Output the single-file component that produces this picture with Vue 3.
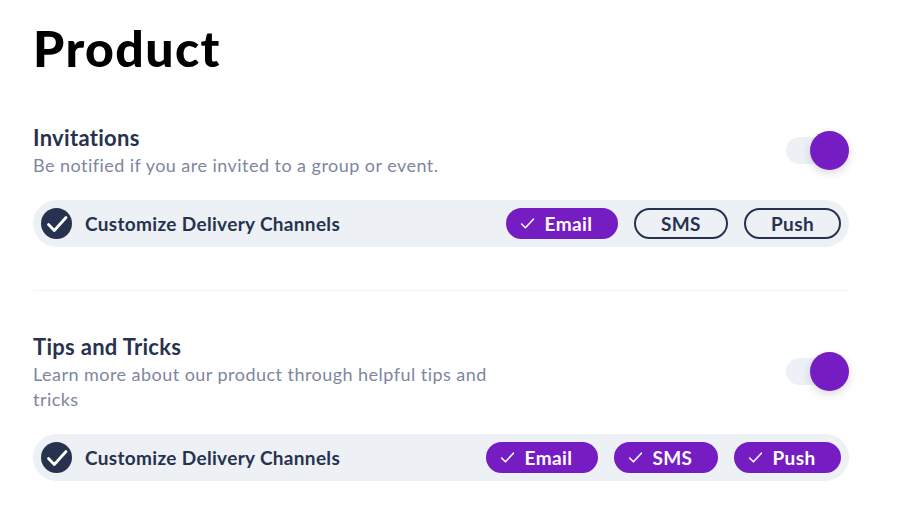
<script setup>
const sections = [
  {
    title: 'Invitations',
    text: 'Be notified if you are invited to a group or event.',
    channels: [
      { name: 'Email', on: true },
      { name: 'SMS', on: false },
      { name: 'Push', on: false },
    ],
  },
  {
    title: 'Tips and Tricks',
    text: 'Learn more about our product through helpful tips and tricks',
    channels: [
      { name: 'Email', on: true },
      { name: 'SMS', on: true },
      { name: 'Push', on: true },
    ],
  },
]
</script>

<template>
  <div class="page">
    <h1 class="heading">Product</h1>

    <section v-for="(s, i) in sections" :key="s.title" class="section" :class="{ 'with-line': i === 0 }">
      <div class="top">
        <div class="info">
          <h2 class="title">{{ s.title }}</h2>
          <p class="desc">{{ s.text }}</p>
        </div>
        <div class="toggle">
          <span class="knob"></span>
        </div>
      </div>

      <div class="channels">
        <span class="round-check">
          <svg width="24" height="24" viewBox="0 0 24 24" fill="none">
            <path d="M3.5 12.5l5.8 6L21 5.5" stroke="#fff" stroke-width="2.8" stroke-linecap="round" stroke-linejoin="round" />
          </svg>
        </span>
        <span class="label">Customize Delivery Channels</span>
        <div class="pills">
          <span v-for="c in s.channels" :key="c.name" class="pill" :class="{ on: c.on }">
            <svg v-if="c.on" class="tick" width="15" height="15" viewBox="0 0 14 14" fill="none">
              <path d="M1.5 7.5l3.6 3.5 7.4-8" stroke="#fff" stroke-width="1.5" stroke-linecap="round" stroke-linejoin="round" />
            </svg>
            {{ c.name }}
          </span>
        </div>
      </div>
    </section>
  </div>
</template>

<style>
html, body {
  background: #fff;
}
</style>

<style scoped>
.page {
  width: 816px;
  padding-left: 33px;
  font-family: "Lato", "Noto Sans", sans-serif;
}

.heading {
  margin: 0;
  padding-top: 18px;
  font-size: 50px;
  line-height: 60px;
  font-weight: 900;
  letter-spacing: 1.4px;
  color: #000;
}

.section {
  padding-top: 40px;
}

.with-line {
  padding-top: 44px;
  padding-bottom: 43px;
  border-bottom: 1px solid #f3f4f6;
}

.top {
  display: flex;
  justify-content: space-between;
  align-items: center;
}

.info {
  width: 470px;
}

.title {
  margin: 0;
  font-size: 22px;
  line-height: 31px;
  font-weight: 700;
  letter-spacing: 0.3px;
  color: #27324f;
}

.desc {
  margin: 0;
  font-size: 18px;
  line-height: 25px;
  letter-spacing: 0.46px;
  color: #7d879e;
}

.toggle {
  position: relative;
  width: 59px;
  height: 27px;
  margin-right: 4px;
  border-radius: 14px;
  background: #edf1f5;
}

.knob {
  position: absolute;
  top: -6px;
  right: -4px;
  width: 39px;
  height: 39px;
  border-radius: 50%;
  background: #761cc3;
  box-shadow: 0 3px 8px rgba(40, 40, 70, 0.18);
}

.channels {
  display: flex;
  align-items: center;
  height: 47px;
  margin-top: 22px;
  padding: 0 8px;
  border-radius: 24px;
  background: #edf1f5;
}

.round-check {
  display: flex;
  align-items: center;
  justify-content: center;
  width: 31px;
  height: 31px;
  border-radius: 50%;
  background: #27324f;
}

.label {
  margin-left: 13px;
  font-size: 19px;
  font-weight: 700;
  letter-spacing: 0.33px;
  color: #27324f;
}

.pills {
  display: flex;
  gap: 16px;
  margin-left: auto;
}

.pill {
  display: flex;
  align-items: center;
  justify-content: center;
  gap: 9.5px;
  box-sizing: border-box;
  height: 31px;
  padding: 0 25px;
  border: 2px solid #27324f;
  border-radius: 16px;
  font-size: 19px;
  font-weight: 700;
  letter-spacing: 0.4px;
  color: #27324f;
}

.pill.on {
  padding: 0 23.5px 0 12px;
  border-color: #761cc3;
  background: #761cc3;
  color: #fff;
}

.tick {
  flex: none;
}
</style>
